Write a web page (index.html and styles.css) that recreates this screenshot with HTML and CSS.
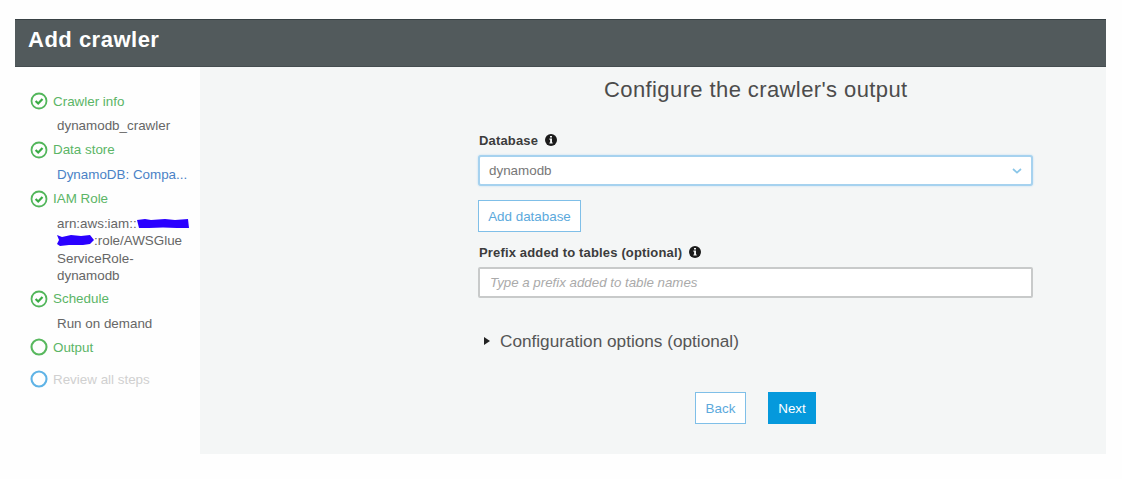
FILE: index.html
```
<!DOCTYPE html>
<html>
<head>
	<title>Add crawler</title>
	<meta charset="utf-8"/>
	<link rel="stylesheet" href="styles.css">
</head>
<body>
	<svg class="defs" width="0" height="0">
		<symbol id="done" viewBox="0 0 18 18">
			<circle cx="9" cy="9" r="7.5" fill="none" stroke="#52b65b" stroke-width="1.8"/>
			<path d="M5.6 9l2.6 2.5 4.3-4.6" fill="none" stroke="#3aab45" stroke-width="2.2"/>
		</symbol>
		<symbol id="open" viewBox="0 0 18 18">
			<circle cx="9" cy="9" r="7.5" fill="none" stroke="currentColor" stroke-width="2.1"/>
		</symbol>
		<symbol id="info" viewBox="0 0 12 12">
			<circle cx="6" cy="6" r="6" fill="#1b1b1b"/>
			<path d="M5 2h2v1.6H5zM4.4 4.6H7v3.8h.7v1.2H4.4V8.4h.7V5.8h-.7z" fill="#f4f6f6"/>
		</symbol>
	</svg>

	<div class="header">
		<h1>Add crawler</h1>
	</div>
	<div class="container">
		<div class="sidebar">
			<div class="step"><svg class="icon"><use href="#done"/></svg>Crawler info</div>
			<div class="detail">dynamodb_crawler</div>
			<div class="step"><svg class="icon"><use href="#done"/></svg>Data store</div>
			<div class="detail link">DynamoDB: Compa...</div>
			<div class="step"><svg class="icon"><use href="#done"/></svg>IAM Role</div>
			<div class="detail role">
				<div>arn:aws:iam::<svg class="mark" width="52" height="10" viewBox="0 0 52 10"><path d="M0 1L8 0 14 1 28 0 38 1 51 0 52 9 40 9 26 8.5 12 9 2 9z" fill="#2a00ff"/></svg></div>
				<div><svg class="mark" width="37" height="11" viewBox="0 0 37 11"><path d="M0 0L5 2 14 0 24 1 33 0 37 5 33 9 26 10 12 10 3 11 0 9 2 5z" fill="#2a00ff"/></svg>:role/AWSGlue</div>
				<div>ServiceRole-</div>
				<div>dynamodb</div>
			</div>
			<div class="step"><svg class="icon"><use href="#done"/></svg>Schedule</div>
			<div class="detail">Run on demand</div>
			<div class="step current"><svg class="icon"><use href="#open"/></svg>Output</div>
			<div class="step todo"><svg class="icon"><use href="#open"/></svg>Review all steps</div>
		</div>

		<div class="main">
			<h2>Configure the crawler's output</h2>
			<div class="form">
				<div class="label">Database <svg class="info"><use href="#info"/></svg></div>
				<div class="select">
					<span>dynamodb</span>
					<svg width="10" height="6" viewBox="0 0 10 6"><path d="M1 1l4 3.6L9 1" fill="none" stroke="#8ac6e8" stroke-width="1.7"/></svg>
				</div>
				<button class="btn add">Add database</button>
				<div class="label prefix">Prefix added to tables (optional) <svg class="info"><use href="#info"/></svg></div>
				<input class="text" type="text" placeholder="Type a prefix added to table names">
				<div class="options">
					<svg width="6" height="8" viewBox="0 0 6 8"><path d="M0 0l6 4-6 4z" fill="#222"/></svg>
					<span>Configuration options (optional)</span>
				</div>
			</div>
			<div class="buttons">
				<button class="btn back">Back</button>
				<button class="btn next">Next</button>
			</div>
		</div>
	</div>
</body>
</html>
```
FILE: styles.css
```
*{
	box-sizing: border-box;
	font-family: "Liberation Sans", Arial, sans-serif;
}

html,body{
	margin: 0;
	padding: 0;
}

body{
	height: 479px;
	padding: 19px 16px 0 15px;
	background: #fefefe;
	color: #666;
	font-size: 13.4px;
	overflow: hidden;
}

.defs{
	display: block;
}

.header{
	height: 48px;
	padding: 7px 13px;
	background: #525a5c;
	border-top: 1px solid #384144;
	border-bottom: 1px solid #454d50;
}

h1{
	margin: 0;
	color: white;
	font-size: 22px;
	line-height: 25px;
	letter-spacing: 0.5px;
}

.container{
	display: flex;
	width: 1091px;
	height: 387px;
}

.sidebar{
	width: 185px;
	padding: 25.4px 0 0 15px;
}

.step{
	display: flex;
	align-items: center;
	gap: 5px;
	height: 18px;
	color: #5bb566;
}

.icon{
	width: 18px;
	height: 18px;
}

.detail{
	height: 30.6px;
	padding-left: 27px;
	line-height: 32px;
	white-space: nowrap;
}

.link{
	color: #4a82c6;
}

.role{
	height: 82px;
	padding-top: 7.6px;
	line-height: 17.3px;
}

.role div{
	height: 17.3px;
}

.mark{
	vertical-align: -1px;
}

.current .icon{
	color: #58b85e;
}

.todo{
	margin-top: 14px;
	color: #d0d0d0;
}

.todo .icon{
	color: #5fb3e6;
}

.main{
	flex: 1;
	background: #f4f6f6;
}

h2{
	margin: 0;
	padding: 9px 0 0 404px;
	color: #4c4c4c;
	font-size: 22px;
	font-weight: normal;
	line-height: 27px;
	letter-spacing: 0.4px;
}

.form{
	width: 555px;
	margin: 29px 0 0 278px;
}

.label{
	display: flex;
	align-items: center;
	gap: 7px;
	height: 16px;
	padding-left: 1px;
	color: #3c3c3c;
	font-size: 13px;
	font-weight: bold;
	letter-spacing: 0.16px;
}

.info{
	width: 12px;
	height: 12px;
}

.select{
	display: flex;
	align-items: center;
	justify-content: space-between;
	height: 31px;
	margin-top: 7px;
	padding: 0 9px;
	background: white;
	border: 2px solid #a6d2ef;
	border-radius: 3px;
	box-shadow: 0 0 2px #b5daf2;
	color: #777;
}

.btn{
	display: block;
	height: 32px;
	padding: 0;
	background: white;
	border: 1px solid #7fbfe8;
	color: #5ba9dc;
	font-size: 13.4px;
}

.add{
	width: 103px;
	margin-top: 14px;
}

.prefix{
	margin-top: 12px;
}

.text{
	display: block;
	width: 100%;
	height: 31px;
	margin-top: 7px;
	padding: 0 10px;
	background: white;
	border: 2px solid #c8caca;
	border-radius: 2px;
	font-size: 13.3px;
}

.text::placeholder{
	color: #aaa;
	font-style: italic;
}

.options{
	display: flex;
	align-items: center;
	gap: 10px;
	margin-top: 33px;
	padding-left: 6px;
	height: 20px;
	font-size: 17.2px;
	color: #555;
}

.buttons{
	display: flex;
	gap: 22px;
	margin: 41px 0 0 495px;
}

.back{
	width: 51px;
}

.next{
	width: 48px;
	background: #0599dc;
	border-color: #0599dc;
	color: white;
}
```
